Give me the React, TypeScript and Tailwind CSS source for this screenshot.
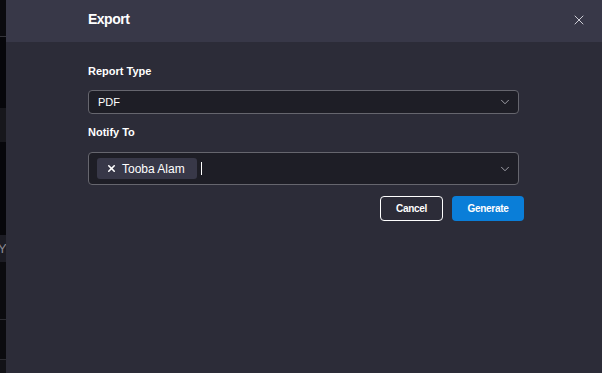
import { ChevronDown, X } from "lucide-react";

export default function App() {
  return (
    <div className="flex h-[373px] w-[602px] overflow-hidden font-['Liberation_Sans',Arial,sans-serif]">
      {/* page behind the drawer */}
      <div className="flex w-[6px] shrink-0 flex-col bg-[#0b0b0f]">
        <div className="h-[37px] border-b border-[#34343a]" />
        <div className="h-[71px] bg-[#07070b]" />
        <div className="h-[34px] bg-[#17171c]" />
        <div className="h-[93px] bg-[#07070b]" />
        <div className="flex h-[27px] items-center overflow-hidden bg-[#1c1c24] text-[13px] text-[#8a8a92]">
          <span className="-ml-[2px]">Y</span>
        </div>
        <div className="h-[58px] border-b border-[#2c2c32]" />
        <div className="h-[40px] border-b border-[#2c2c32]" />
        <div className="flex-1 bg-[#121217]" />
      </div>

      {/* drawer */}
      <div className="flex flex-1 flex-col bg-[#2c2c38]">
        <div className="flex h-[42px] shrink-0 items-center justify-between bg-[#383848] pb-[3px] pl-[82px] pr-[15px]">
          <h2 className="text-[14px] font-bold tracking-[-0.5px] text-white">Export</h2>
          <X size={16} strokeWidth={1.4} className="text-[#d8d8e0]" />
        </div>

        <div className="flex flex-col pl-[82px] pt-[22px]">
          <label className="text-[11px] font-bold leading-[14px] text-white">Report Type</label>
          <div className="mt-[12px] flex h-[24px] w-[431px] items-center justify-between rounded-[4px] border border-[#66666e] bg-[#1e1e26] pl-[9px] pr-[6px]">
            <span className="text-[11px] text-white">PDF</span>
            <ChevronDown size={14} strokeWidth={1.3} className="text-[#c8c8d0]" />
          </div>

          <label className="mt-[11px] text-[11px] font-bold leading-[14px] text-white">Notify To</label>
          <div className="mt-[13px] flex h-[33px] w-[431px] items-center justify-between rounded-[4px] border border-[#66666e] bg-[#1e1e26] pl-[8px] pr-[6px]">
            <div className="flex items-center">
              <div className="flex h-[21px] items-center gap-[5px] rounded-[3px] bg-[#383848] pl-[9px] pr-[12px]">
                <X size={11} strokeWidth={3.5} className="text-white" />
                <span className="text-[12px] text-white">Tooba Alam</span>
              </div>
              <div className="ml-[4px] h-[13px] w-px bg-white" />
            </div>
            <ChevronDown size={14} strokeWidth={1.3} className="text-[#c8c8d0]" />
          </div>

          <div className="mt-[11px] flex w-[436px] justify-end gap-[9px]">
            <button className="h-[25px] w-[63px] rounded-[4px] border border-white text-[10px] font-bold tracking-[-0.3px] text-white">
              Cancel
            </button>
            <button className="h-[25px] w-[72px] rounded-[4px] bg-[#0a7ed8] text-[10px] font-bold tracking-[-0.3px] text-white">
              Generate
            </button>
          </div>
        </div>
      </div>
    </div>
  );
}
